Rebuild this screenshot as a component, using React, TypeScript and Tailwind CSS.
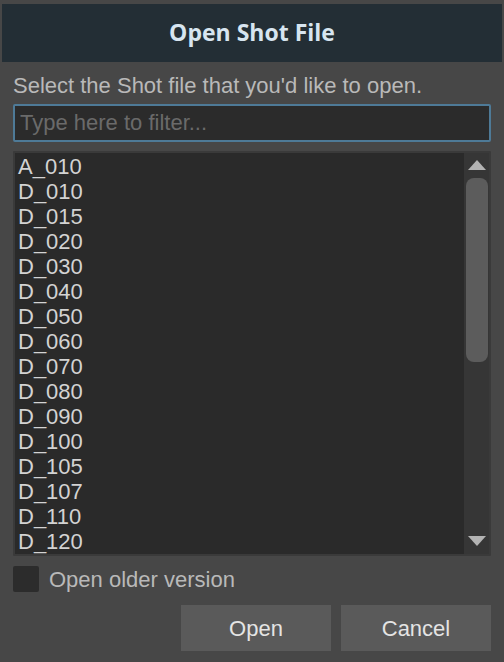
import React, { useState } from 'react';

const shots = [
  'A_010', 'D_010', 'D_015', 'D_020', 'D_030', 'D_040', 'D_050', 'D_060',
  'D_070', 'D_080', 'D_090', 'D_100', 'D_105', 'D_107', 'D_110', 'D_120',
];

const sans = { fontFamily: '"Liberation Sans", Arial, sans-serif' };

export default function App() {
  const [filter, setFilter] = useState('');
  const [older, setOlder] = useState(false);

  const visible = shots.filter((s) => s.toLowerCase().includes(filter.toLowerCase()));

  return (
    <div className="w-[504px] h-[662px] bg-[#474747] flex flex-col overflow-hidden" style={sans}>
      {/* Title bar */}
      <div className="mt-[4px] mx-[2px] h-[58px] bg-[#232e35] flex items-center justify-center">
        <h1 className="text-[23px] font-bold text-[#d7e5f0] font-['Open_Sans',sans-serif] -mt-[1px]">Open Shot File</h1>
      </div>

      <div className="px-[13px] flex flex-col flex-1">
        <p className="mt-[12px] h-[24px] leading-[24px] text-[22px] text-[#b9b9b9] whitespace-nowrap">
          Select the Shot file that you'd like to open.
        </p>

        <input
          autoFocus
          value={filter}
          onChange={(e) => setFilter(e.target.value)}
          placeholder="Type here to filter..."
          className="mt-[6px] h-[38px] w-full rounded-[2px] border-2 border-[#4e7a97] bg-[#2b2b2b] px-[5px] text-[22px] text-[#d2d2d2] placeholder:text-[#6a6a6a] outline-none caret-[#d0d0d0]"
        />

        {/* Shot list */}
        <div className="mt-[9px] h-[405px] border-2 border-[#3a3a3a] rounded-[1px] flex overflow-hidden">
          <ul className="flex-1 bg-[#2a2a2a] pt-[1px] pl-[3px]">
            {visible.map((s) => (
              <li key={s} className="h-[25px] leading-[25px] text-[22px] text-[#d3d3d3]">
                {s}
              </li>
            ))}
          </ul>
          <div className="w-[25px] bg-[#363636] flex flex-col items-center">
            <svg width="18" height="10" viewBox="0 0 18 10" className="mt-[7px]">
              <polygon points="9,0 18,10 0,10" fill="#b3b3b3" />
            </svg>
            <div className="mt-[8px] w-[22px] h-[184px] rounded-[8px] bg-[#5c5c5c]" />
            <div className="flex-1" />
            <svg width="18" height="10" viewBox="0 0 18 10" className="mb-[8px]">
              <polygon points="0,0 18,0 9,10" fill="#b3b3b3" />
            </svg>
          </div>
        </div>

        {/* Older version checkbox */}
        <label className="mt-[10px] h-[26px] flex items-center gap-[10px] cursor-pointer">
          <span
            onClick={() => setOlder(!older)}
            className="w-[26px] h-[26px] rounded-[2px] bg-[#2c2c2c] flex items-center justify-center text-[#d0d0d0] text-[18px]"
          >
            {older ? '✓' : ''}
          </span>
          <span className="text-[22px] text-[#b9b9b9]">Open older version</span>
        </label>

        {/* Buttons */}
        <div className="mt-[13px] flex justify-end gap-[10px]">
          <button className="w-[150px] h-[46px] bg-[#5a5a5a] text-[22px] text-[#e4e4e4]">Open</button>
          <button className="w-[150px] h-[46px] bg-[#5a5a5a] text-[22px] text-[#e4e4e4]">Cancel</button>
        </div>
      </div>
    </div>
  );
}
